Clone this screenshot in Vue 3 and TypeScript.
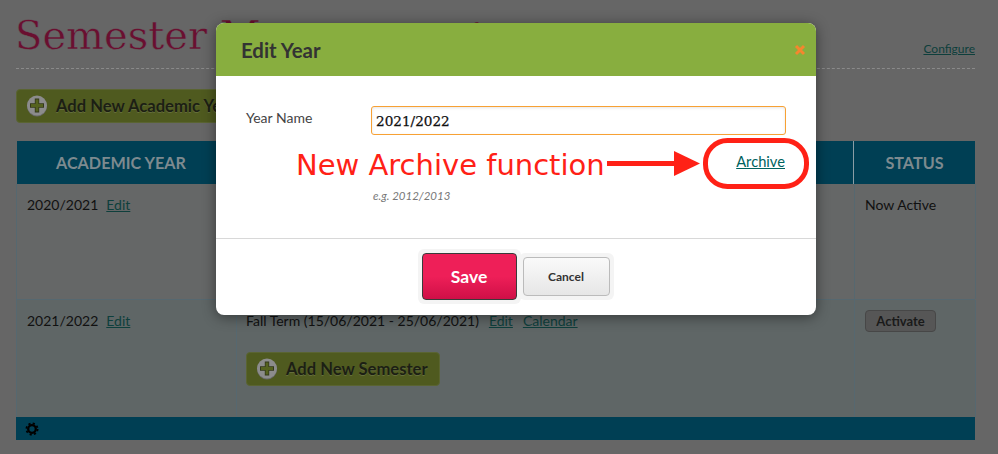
<script setup lang="ts">
interface Row { year: string; status?: string; action?: string; term?: string }
const rows: Row[] = [
  { year: '2020/2021', status: 'Now Active' },
  { year: '2021/2022', action: 'Activate', term: 'Fall Term (15/06/2021 - 25/06/2021)' },
]
</script>

<template>
  <div class="page">
    <header class="head">
      <h1 class="title">Semester Management</h1>
      <a class="link small" href="#">Configure</a>
    </header>
    <button class="add first">
      <svg class="plus" viewBox="0 0 22 22" width="22" height="22"><circle cx="11" cy="11.500" r="10" fill="#6a6a6a"/><circle cx="11" cy="10.500" r="10" fill="#8c8c8c"/><path d="M11 3.500v14M4 10.500h14" stroke="#33381a" stroke-width="4.400"/><path d="M11 4.500v12M5 10.500h12" stroke="#55621f" stroke-width="2.800"/></svg>
      Add New Academic Year
    </button>
    <section class="table">
      <div class="cols thead">
        <div class="th shift">ACADEMIC YEAR</div>
        <div class="th"></div>
        <div class="th">STATUS</div>
      </div>
      <div v-for="(r, i) in rows" :key="r.year" class="cols row" :class="i === 0 ? 'odd' : 'even'">
        <div class="td"><span class="yr">{{ r.year }}</span><a class="link" href="#">Edit</a></div>
        <div class="td mid">
          <template v-if="r.term">
            <div class="term"><span>{{ r.term }}</span><a class="link" href="#">Edit</a><a class="link" href="#">Calendar</a></div>
            <button class="add sem">
              <svg class="plus" viewBox="0 0 22 22" width="22" height="22"><circle cx="11" cy="11.500" r="10" fill="#6a6a6a"/><circle cx="11" cy="10.500" r="10" fill="#8c8c8c"/><path d="M11 3.500v14M4 10.500h14" stroke="#33381a" stroke-width="4.400"/><path d="M11 4.500v12M5 10.500h12" stroke="#55621f" stroke-width="2.800"/></svg>
              Add New Semester
            </button>
          </template>
        </div>
        <div class="td last">
          <span v-if="r.status">{{ r.status }}</span>
          <button v-else class="activate">{{ r.action }}</button>
        </div>
      </div>
      <footer class="bar">
        <svg width="14" height="14" viewBox="0 0 14 14" fill="none" stroke="#000"><circle cx="7" cy="7" r="3.800" stroke-width="2.300"/><circle cx="7" cy="7" r="5.600" stroke-width="1.800" stroke-dasharray="2.200 2.200"/></svg>
      </footer>
    </section>

    <div class="modal" role="dialog">
      <div class="m-head">
        <h2>Edit Year</h2>
        <svg class="close" width="12" height="12" viewBox="0 0 12 12"><path d="M2 2l8 8M10 2l-8 8" stroke="#f5862e" stroke-width="3"/></svg>
      </div>
      <div class="m-body">
        <div class="field">
          <label>Year Name</label>
          <input class="inp" value="2021/2022" />
        </div>
        <div class="arch"><a class="link teal" href="#">Archive</a></div>
        <div class="hint">e.g. 2012/2013</div>
      </div>
      <div class="m-foot">
        <span class="halo"><button class="save">Save</button></span>
        <span class="halo"><button class="cancel">Cancel</button></span>
      </div>
      <span class="note">New Archive function</span>
      <svg class="mark" width="220" height="60" viewBox="0 0 220 60">
        <path d="M0 29.500H70" stroke="#ff2116" stroke-width="5"/>
        <path d="M67 17L93 29.500L67 42Z" fill="#ff2116"/>
        <rect x="98.500" y="6.500" width="101" height="46" rx="22" fill="none" stroke="#ff2116" stroke-width="5"/>
      </svg>
    </div>
  </div>
</template>

<style>
html, body { margin: 0; background: #666; }
</style>

<style scoped>
.page {
  position: relative;
  width: 998px;
  height: 454px;
  box-sizing: border-box;
  padding: 0 23px 0 16px;
  overflow: hidden;
  font-family: Lato, "Liberation Sans", sans-serif;
  font-size: 14px;
  color: #111;
}
.head {
  height: 68px;
  border-bottom: 1px dashed #8a8a8a;
  display: flex;
  justify-content: space-between;
  align-items: flex-start;
}
.title {
  margin: 11px 0 0 -1px;
  font-family: "DejaVu Serif", serif;
  font-weight: 400;
  font-size: 40px;
  line-height: 48px;
  color: #6a0f30;
  -webkit-text-stroke: .5px #666;
  white-space: nowrap;
}
.link { color: #0e3f3c; text-decoration: underline; }
.small { font-size: 12px; margin-top: 41px; }
.add {
  display: flex;
  align-items: center;
  gap: 8px;
  font-family: inherit;
  font-weight: 700;
  font-size: 16.600px;
  color: #1c1f14;
  text-shadow: 0 1px 0 rgba(255, 255, 255, .12);
  background: #4f5a1f;
  border: 1px solid #5a6432;
  border-radius: 4px;
  padding: 0 9px;
  height: 34px;
  white-space: nowrap;
}
.plus { flex: none; }
.first { margin-top: 20px; width: 230px; }
.table { margin-top: 18px; width: 959px; }
.cols { display: grid; grid-template-columns: 220px 618px 121px; }
.thead { height: 43px; background: #003f54; margin-left: 1px; grid-template-columns: 219px 618px 121px; }
.th {
  display: flex;
  align-items: center;
  justify-content: center;
  color: #7d8a8f;
  font-weight: 700;
  font-size: 16.200px;
  border-right: 1px solid #8a9da5;
}
.th:last-child { border-right: 0; }
.shift { padding-right: 10px; }
.row { box-sizing: border-box; border-bottom: 1px solid #566870; border-left: 1px solid #566870; }
.odd { height: 116px; background: #656767; }
.even { height: 117px; background: #5f6666; border-bottom: 0; }
.td { padding: 12px 10px; border-right: 1px solid #566870; box-sizing: border-box; }
.td .yr { margin-right: 8px; }
.mid { padding-top: 12px; padding-left: 9px; }
.term { display: flex; gap: 10px; }
.sem { margin-top: 23px; width: 194px; }
.last { border-right: 1px solid #566870; }
.activate {
  font-family: inherit;
  font-weight: 700;
  font-size: 13px;
  color: #1a1a1a;
  background: #565656;
  border: 1px solid #474747;
  border-radius: 4px;
  width: 71px;
  height: 22px;
  padding: 0;
  margin-top: -2px;
  display: block;
}
.bar { height: 23px; background: #003f54; display: flex; align-items: center; padding-left: 9px; }

.modal {
  position: absolute;
  left: 216px;
  top: 23px;
  width: 600px;
  height: 292px;
  background: #fff;
  border-radius: 8px;
  box-shadow: 0 2px 14px rgba(0, 0, 0, .45);
  display: flex;
  flex-direction: column;
}
.m-head {
  height: 53px;
  background: #88ae3f;
  border-radius: 8px 8px 0 0;
  display: flex;
  justify-content: space-between;
  align-items: center;
  padding: 0 10px 0 25px;
}
.m-head h2 { margin: 0; font-size: 20.400px; font-weight: 700; color: #333; }
.close { margin-top: 1px; }
.m-body { height: 163px; padding: 30px 30px 0; box-sizing: border-box; border-bottom: 1px solid #d8d8d8; }
.field { display: flex; }
.field label { width: 125px; color: #444; padding-top: 3px; }
.inp {
  width: 415px;
  height: 29px;
  box-sizing: border-box;
  border: 1px solid #f7a134;
  border-radius: 3px;
  padding: 0 4px;
  font-family: "DejaVu Serif", serif;
  font-size: 13.600px;
  color: #111;
  -webkit-text-stroke: .25px #111;
  outline: 0;
  box-shadow: inset 0 1px 3px rgba(0, 0, 0, .1);
}
.arch { display: flex; justify-content: flex-end; margin: 17px 1px 0 0; font-size: 14.700px; }
.teal { color: #00635f; }
.hint { margin: 19px 0 0 127px; font-style: italic; font-size: 11.500px; color: #777; }
.m-foot { flex: 1; display: flex; justify-content: center; align-items: center; padding-bottom: 2px; padding-right: 1px; }
.halo { padding: 4px; background: #f4f4f4; border-radius: 6px; display: flex; }
.halo + .halo { margin-left: -2px; }
.save {
  width: 95px;
  height: 47px;
  border: 1px solid #3a3a3a;
  border-radius: 4px;
  background: linear-gradient(#ee1f58 50%, #cf0f47);
  color: #fff;
  font-family: inherit;
  font-weight: 700;
  font-size: 17.500px;
}
.cancel {
  width: 87px;
  height: 39px;
  border: 1px solid #bbb;
  border-radius: 4px;
  background: linear-gradient(#fafafa, #e6e6e6);
  color: #333;
  font-family: inherit;
  font-weight: 700;
  font-size: 12px;
}
.note {
  position: absolute;
  left: 80px;
  top: 125px;
  font-family: "DejaVu Sans", sans-serif;
  font-size: 29px;
  color: #ff2116;
  white-space: nowrap;
}
.mark { position: absolute; left: 391px; top: 111px; }
</style>
